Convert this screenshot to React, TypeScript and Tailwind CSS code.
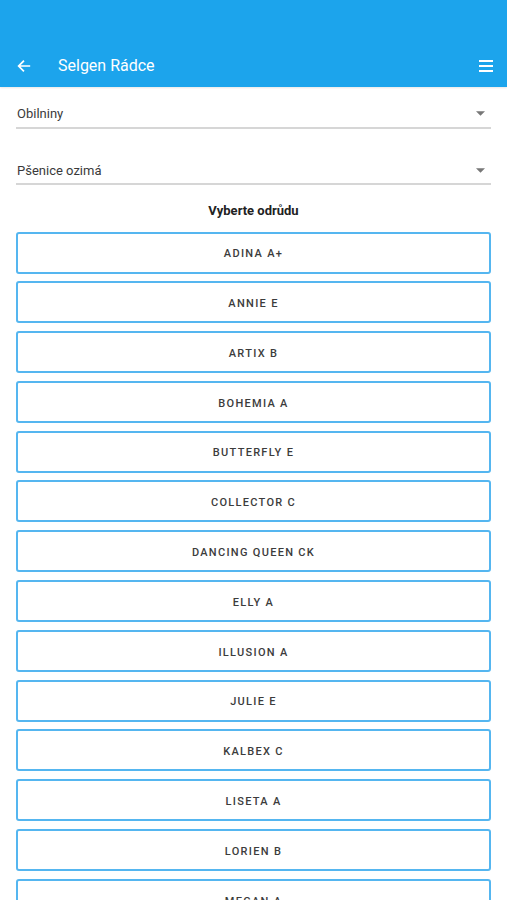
import React from 'react';

const varieties = [
  'ADINA A+',
  'ANNIE E',
  'ARTIX B',
  'BOHEMIA A',
  'BUTTERFLY E',
  'COLLECTOR C',
  'DANCING QUEEN CK',
  'ELLY A',
  'ILLUSION A',
  'JULIE E',
  'KALBEX C',
  'LISETA A',
  'LORIEN B',
  'MEGAN A',
];

const Select = ({ value }: { value: string }) => (
  <div className="flex items-center justify-between border-b-2 border-[#d6d6d6] pb-[3px] pl-[1px] pr-[6px]">
    <span className="text-[13px] text-[#3a3a3a]">{value}</span>
    <svg width="9" height="5" viewBox="0 0 10 5">
      <path d="M0 0 L10 0 L5 5 Z" fill="#777" />
    </svg>
  </div>
);

export default function App() {
  return (
    <div className="h-[900px] w-full overflow-hidden bg-white font-['Roboto',sans-serif]">
      <header className="flex h-[87px] items-end bg-[#1ca4ec] pb-[9px] shadow-[0_1px_2px_rgba(0,0,0,0.1)]">
        <div className="flex w-full items-center pl-[16px] pr-[14px]">
          <svg width="16" height="16" viewBox="0 0 24 24" fill="none" stroke="white" strokeWidth="2.6" strokeLinecap="square">
            <path d="M20 12H5M11 5l-7 7 7 7" />
          </svg>
          <h1 className="ml-[26px] text-[16px] font-normal text-white">Selgen Rádce</h1>
          <div className="ml-auto flex flex-col gap-[3px]">
            <span className="block h-[2px] w-[14px] bg-white" />
            <span className="block h-[2px] w-[14px] bg-white" />
            <span className="block h-[2px] w-[14px] bg-white" />
          </div>
        </div>
      </header>

      <div className="px-[16px] pt-[17px]">
        <Select value="Obilniny" />
        <div className="h-[32px]" />
        <Select value="Pšenice ozimá" />
        <h2 className="mt-[16px] text-center text-[13px] font-bold text-[#222]">Vyberte odrůdu</h2>
        <div className="mt-[11px] flex flex-col gap-[7.8px]">
          {varieties.map((v) => (
            <button
              key={v}
              className="flex h-[42px] w-full shrink-0 items-center justify-center rounded-[3px] border-2 border-[#55b6f0] bg-white pt-[4px] text-[11px] font-medium tracking-[1.3px] text-[#3c3c3c]"
            >
              {v}
            </button>
          ))}
        </div>
      </div>
    </div>
  );
}
